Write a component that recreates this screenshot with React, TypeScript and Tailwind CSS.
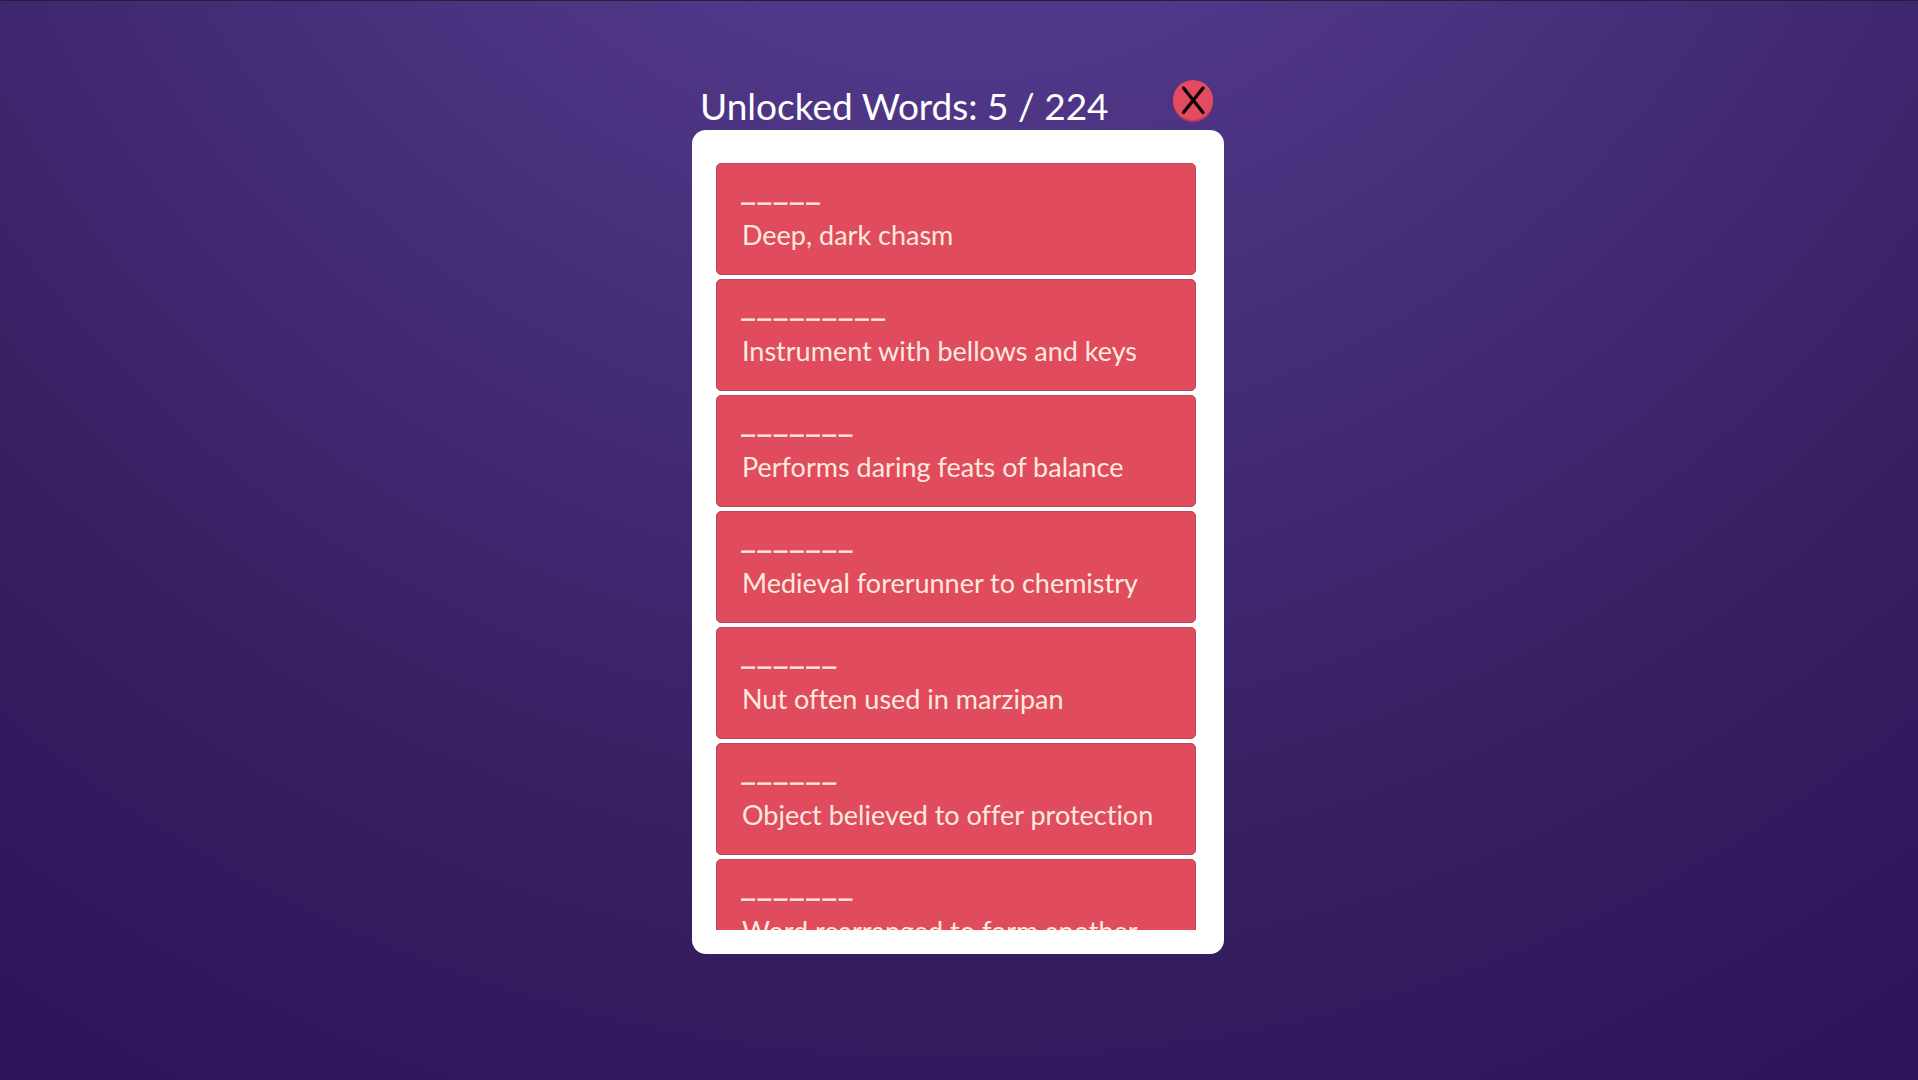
import { useState } from "react";

const words = [
  { id: 1, letters: 5, clue: "Deep, dark chasm" },
  { id: 2, letters: 9, clue: "Instrument with bellows and keys" },
  { id: 3, letters: 7, clue: "Performs daring feats of balance" },
  { id: 4, letters: 7, clue: "Medieval forerunner to chemistry" },
  { id: 5, letters: 6, clue: "Nut often used in marzipan" },
  { id: 6, letters: 6, clue: "Object believed to offer protection" },
  { id: 7, letters: 7, clue: "Word rearranged to form another" },
];

function WordCard({ letters, clue }: { letters: number; clue: string }) {
  return (
    <li className="h-28 shrink-0 rounded-[5px] border border-[#b8455f] bg-[#e14b5e] px-[25px] pt-[19px] text-[#fdeade]">
      <div className="flex gap-1 font-['Liberation_Sans',sans-serif] text-[22px] leading-5 [-webkit-text-stroke:1px]">
        {Array.from({ length: letters }, (_, i) => (
          <span key={i}>_</span>
        ))}
      </div>
      <p className="mt-4 whitespace-nowrap text-[27px] leading-8 [font-variant-ligatures:none]">{clue}</p>
    </li>
  );
}

export default function App() {
  const [open, setOpen] = useState(true);

  return (
    <main className="flex min-h-screen justify-center border-t border-[#2a1c3c] bg-[radial-gradient(circle_at_50%_-41%,#51398a_445px,#3d266d_1089px,#371f60_1303px,#321a5e_1525px,#2b1458_1801px)] pr-0.5 pt-[79px] font-[Lato,sans-serif]">
      {open && (
        <section className="w-[532px]">
          <header className="flex h-[50px] items-start justify-between pl-2 pr-[11px]">
            <h1 className="text-[37px] leading-[52px] text-white">
              Unlocked Words: 5 / 224
            </h1>
            <button
              type="button"
              aria-label="Close"
              onClick={() => setOpen(false)}
              className="flex size-10 items-center justify-center rounded-full bg-[#e34c60] shadow-[0_2px_0_#b93a55]"
            >
              <svg viewBox="0 0 40 40" className="size-10" fill="none" stroke="#120308" strokeWidth="3.4" strokeLinecap="round">
                <path d="M10.5 8 L30 32.5 M30 8 L10.5 32.5" />
              </svg>
            </button>
          </header>
          <div className="rounded-[14px] bg-white pb-6 pl-6 pr-7 pt-[33px]">
            <ul className="flex h-[767px] flex-col gap-1 overflow-hidden">
              {words.map((word) => (
                <WordCard key={word.id} letters={word.letters} clue={word.clue} />
              ))}
            </ul>
          </div>
        </section>
      )}
    </main>
  );
}
